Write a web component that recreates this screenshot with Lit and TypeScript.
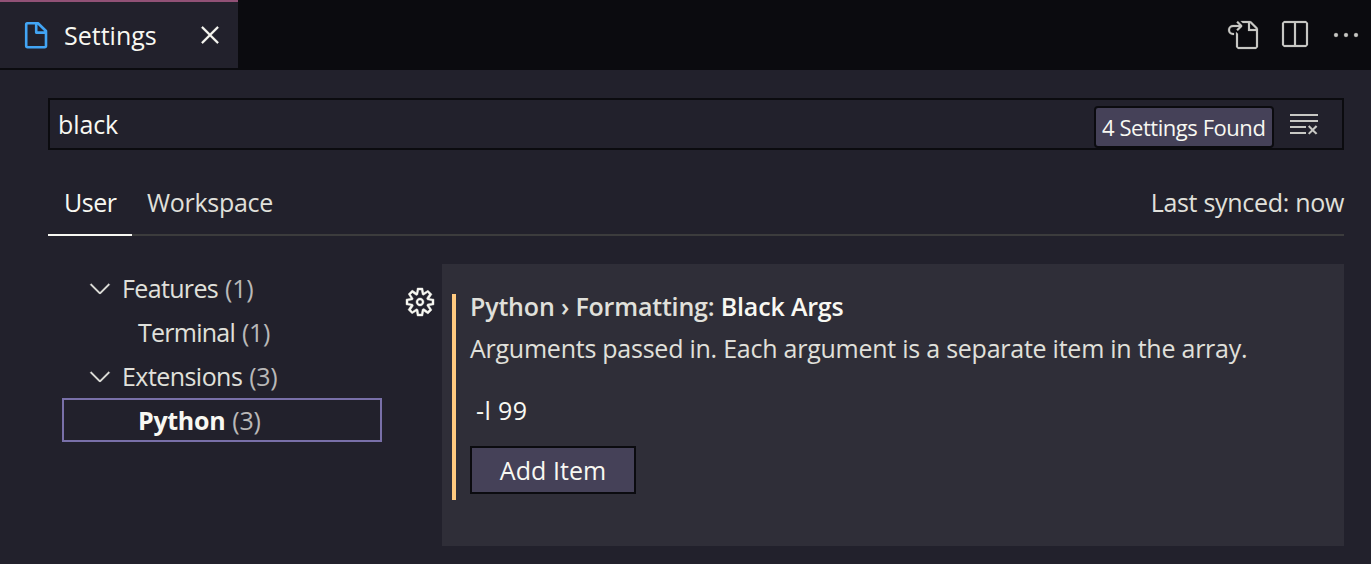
import { LitElement, html, css, svg } from "lit";
import { customElement, property } from "lit/decorators.js";

const ICONS: Record<string, string> = {
  goToFile:
    "M6 5.914l2.06-2.06v-.708L5.915 1l-.707.707.043.043.25.25 1 1h-3a2.5 2.5 0 0 0 0 5H4V7h-.5a1.5 1.5 0 1 1 0-3h3L5.207 5.293 5.914 6 6 5.914zM11 2H8.328l-1-1H12l.71.29 3 3L16 5v9l-1 1H6l-1-1V6.5l1 .847V14h9V6h-4V2zm1 0v3h3l-3-3z",
  split: "M14 1H3L2 2v11l1 1h11l1-1V2l-1-1zM8 13H3V2h5v11zm6 0H9V2h5v11z",
  more: "M4 8a1 1 0 1 1-2 0 1 1 0 0 1 2 0zm5 0a1 1 0 1 1-2 0 1 1 0 0 1 2 0zm5 0a1 1 0 1 1-2 0 1 1 0 0 1 2 0z",
  close:
    "M8 8.707l3.646 3.647.708-.707L8.707 8l3.647-3.646-.707-.708L8 7.293 4.354 3.646l-.707.708L7.293 8l-3.646 3.646.707.708L8 8.707z",
  chevron: "M7.976 10.072l4.357-4.357.62.618L8.284 11h-.618L3 6.333l.619-.618 4.357 4.357z",
  clear:
    "M10 12.6l.7.7 1.6-1.6 1.6 1.6.8-.7L13 11l1.7-1.6-.8-.8-1.6 1.7-1.6-1.7-.7.8 1.6 1.6-1.6 1.6zM1 4h14V3H1v1zm0 3h14V6H1v1zm8 2.5V9H1v1h8v-.5zM9 13v-1H1v1h8z",
  gear: "M9.1 4.4L8.6 2H7.4l-.5 2.4-.7.3-2-1.3-.9.8 1.3 2-.2.7-2.4.5v1.2l2.4.5.3.8-1.3 2 .8.8 2-1.3.8.3.4 2.3h1.2l.5-2.4.8-.3 2 1.3.8-.8-1.3-2 .3-.8 2.3-.4V7.4l-2.4-.5-.3-.8 1.3-2-.8-.8-2 1.3-.7-.2zM9.4 1l.5 2.4L12 2.1l2 2-1.4 2.1 2.4.4v2.8l-2.4.5L14 12l-2 2-2.1-1.4-.5 2.4H6.6l-.5-2.4L4 13.9l-2-2 1.4-2.1L1 9.4V6.6l2.4-.5L2.1 4l2-2 2.1 1.4.4-2.4h2.8zm.6 7c0 1.1-.9 2-2 2s-2-.9-2-2 .9-2 2-2 2 .9 2 2zM8 9c.6 0 1-.4 1-1s-.4-1-1-1-1 .4-1 1 .4 1 1 1z",
};

@customElement("ui-icon")
class UiIcon extends LitElement {
  @property() name = "";
  static styles = css`
    :host { display: block; flex: none; width: 32px; height: 32px; }
    svg {
      display: block; width: 32px; height: 32px; overflow: visible;
      fill: currentColor; stroke: currentColor; stroke-width: var(--icon-weight, 0);
    }
  `;
  render() {
    return html`<svg viewBox="0 0 16 16">${svg`<path fill-rule="evenodd" clip-rule="evenodd" d=${ICONS[this.name]}></path>`}</svg>`;
  }
}

const TREE = [
  { label: "Features", count: 1, group: true, cls: "features" },
  { label: "Terminal", count: 1, group: false, cls: "terminal" },
  { label: "Extensions", count: 3, group: true, cls: "extensions" },
  { label: "Python", count: 3, group: false, cls: "python" },
];

@customElement("app-root")
class AppRoot extends LitElement {
  static styles = css`
    :host {
      display: flex; flex-direction: column; box-sizing: border-box;
      width: 100%; height: 564px; overflow: hidden;
      background: #22212c; color: #e0e0db;
      font: 25px/36px "Open Sans", "Noto Sans", sans-serif;
      letter-spacing: -0.3px; white-space: nowrap;
    }
    * { box-sizing: border-box; }
    .bar { display: flex; flex: none; height: 70px; background: #0b0b0f; }
    .tab {
      display: flex; align-items: center; width: 238px; height: 68px;
      padding: 0 12px 0 24px; border-top: 2px solid #915176;
      background: #22212c; color: #f8f8f2;
    }
    .file { display: block; width: 24px; height: 28px; margin-right: 16px; }
    .tab .name { flex: 1; letter-spacing: 0; }
    .tab ui-icon { --icon-weight: 0.15; }
    .actions { display: flex; gap: 20px; margin-left: auto; padding: 19px 9px 0 0; color: #c8c8c4; --icon-weight: 0.1; }
    .search {
      display: flex; flex: none; height: 52px; margin: 28px 27px 0 48px;
      padding: 0 22px 0 8px; border: 2px solid #0b0b0f; color: #f8f8f2;
    }
    .query { flex: 1; padding-top: 6px; letter-spacing: -0.1px; }
    .found {
      height: 42px; width: 180px; margin: 6px 14px 0 0; padding-left: 6px;
      border: 2px solid #0b0b0f; border-radius: 4px; background: #454158;
      font-size: 22px; line-height: 39px; letter-spacing: -0.45px;
    }
    .search ui-icon { margin-top: 8px; color: #c8c8c4; }
    .scopes {
      display: flex; flex: none; height: 50px; margin: 36px 27px 0 48px;
      border-bottom: 2px solid #3c3c3d; line-height: 33px;
    }
    .scope { height: 50px; padding: 0 16px; }
    .user { width: 84px; border-bottom: 2px solid #f8f8f2; color: #f8f8f2; letter-spacing: -0.5px; }
    .workspace { padding-left: 15px; }
    .synced { margin-left: auto; }
    .main { display: flex; flex: none; margin: 28px 27px 0 62px; }
    .tree { width: 320px; padding-top: 2px; }
    .row { display: flex; align-items: center; height: 44px; padding-left: 76px; line-height: 40px; }
    .row.group { padding-left: 22px; }
    .row ui-icon { margin-right: 6px; --icon-weight: 0.1; }
    .row .label { margin-right: 7px; }
    .features .label { letter-spacing: -0.65px; }
    .terminal .label { letter-spacing: -0.75px; }
    .extensions .label { letter-spacing: -0.55px; }
    .row .count { color: #b9b8b8; }
    .row.python { border: 2px solid #7970a9; padding-left: 74px; }
    .row.python .label { color: #f8f8f2; font-weight: 700; }
    .gear { width: 60px; padding: 22px 0 0 22px; color: #f8f8f2; --icon-weight: 0.2; }
    .card { flex: 1; height: 282px; padding: 30px 0 0 10px; background: #2f2e38; }
    .setting { height: 206px; padding-left: 14px; border-left: 4px solid #ffca80; }
    .title { height: 36px; font-weight: 600; line-height: 24px; letter-spacing: -0.18px; }
    .title .key { color: #f8f8f2; }
    .desc { height: 44px; line-height: 36px; letter-spacing: -0.245px; }
    .value { height: 72px; padding: 18px 0 0 6px; color: #f8f8f2; letter-spacing: 0.4px; }
    .add {
      display: flex; align-items: center; justify-content: center;
      width: 166px; height: 48px; border: 2px solid #0b0b0f;
      background: #454158; color: #f8f8f2; letter-spacing: 0.05px;
    }
  `;
  render() {
    return html`
      <div class="bar">
        <div class="tab">
          <svg class="file" viewBox="0 0 24 28" fill="none" stroke="#42a5f5" stroke-width="2.6" stroke-linejoin="round">
            <path d="M3.2 2.2H14L22 10V24.8Q22 26.2 20.6 26.2H3.6Q2.2 26.2 2.2 24.8V3.4Q2.2 2.2 3.2 2.2ZM12.2 2.4V11.6H21.8"></path>
          </svg>
          <span class="name">Settings</span>
          <ui-icon name="close"></ui-icon>
        </div>
        <div class="actions">
          <ui-icon name="goToFile"></ui-icon>
          <ui-icon name="split"></ui-icon>
          <ui-icon name="more"></ui-icon>
        </div>
      </div>
      <div class="search">
        <span class="query">black</span>
        <span class="found">4 Settings Found</span>
        <ui-icon name="clear"></ui-icon>
      </div>
      <div class="scopes">
        <span class="scope user">User</span>
        <span class="scope workspace">Workspace</span>
        <span class="synced">Last synced: now</span>
      </div>
      <div class="main">
        <div class="tree">
          ${TREE.map(
            (r) => html`<div class="row ${r.group ? "group" : ""} ${r.cls}">
              ${r.group ? html`<ui-icon name="chevron"></ui-icon>` : ""}<span class="label">${r.label}</span><span class="count">(${r.count})</span>
            </div>`
          )}
        </div>
        <div class="gear"><ui-icon name="gear"></ui-icon></div>
        <div class="card">
          <div class="setting">
            <div class="title"><span class="path">Python › Formatting: </span><span class="key">Black Args</span></div>
            <div class="desc">Arguments passed in. Each argument is a separate item in the array.</div>
            <div class="value">-l 99</div>
            <div class="add"><span class="addlabel">Add Item</span></div>
          </div>
        </div>
      </div>
    `;
  }
}
